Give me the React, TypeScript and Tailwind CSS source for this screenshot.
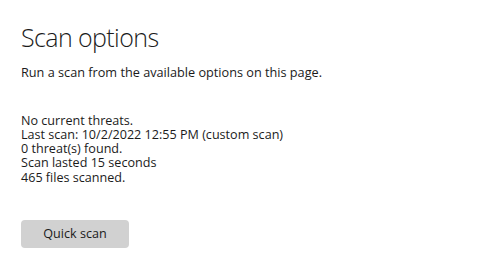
export default function App() {
  return (
    <div className="w-[500px] h-[264px] bg-white text-[#1b1b1b] overflow-hidden" style={{ fontFamily: '"Segoe UI", "Open Sans", "Noto Sans", sans-serif' }}>
      <div className="pl-[21px] pt-[20px] flex flex-col items-start">
        <h1 className="text-[25px] font-light leading-[34px] tracking-[-0.6px]">Scan options</h1>
        <p className="mt-[11px] text-[12.7px] leading-[15px]">Run a scan from the available options on this page.</p>
        <div className="mt-[33px] text-[12.6px] leading-[14.2px] flex flex-col">
          <span className="leading-[15px]">No current threats.</span>
          <span>Last scan: 10/2/2022 12:55 PM (custom scan)</span>
          <span>0 threat(s) found.</span>
          <span>Scan lasted 15 seconds</span>
          <span>465 files scanned.</span>
        </div>
        <button className="mt-[35.6px] w-[108px] h-[28px] rounded-[4px] bg-[#d1d1d1] text-[12.6px] text-[#1b1b1b]">Quick scan</button>
      </div>
    </div>
  );
}
